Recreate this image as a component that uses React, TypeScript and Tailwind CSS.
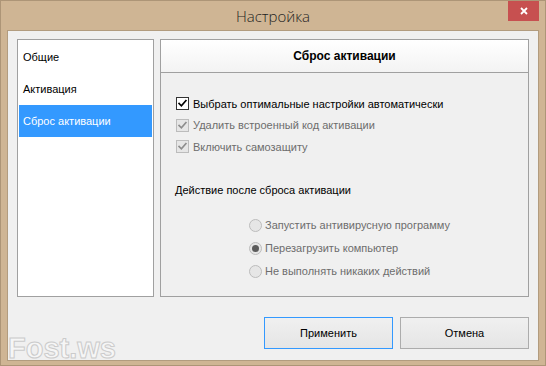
import React, { useState } from 'react';

const sections = ['Общие', 'Активация', 'Сброс активации'];

const CheckMark = ({ color }: { color: string }) => (
  <svg viewBox="0 0 13 13" className="w-[13px] h-[13px]">
    <path d="M2.5 6.5 L5.2 9.3 L10.5 3.2" fill="none" stroke={color} strokeWidth="2" strokeLinecap="square" />
  </svg>
);

const Checkbox = ({ label, disabled }: { label: string; disabled?: boolean }) => (
  <div className="h-[21.5px] flex items-center">
    <div
      className={`w-[13px] h-[13px] border flex items-center justify-center ${
        disabled ? 'border-[#bcbcbc] bg-[#e6e6e6]' : 'border-[#333333] bg-white'
      }`}
    >
      <CheckMark color={disabled ? '#8d8d8d' : '#000000'} />
    </div>
    <span className={`ml-[4px] ${disabled ? 'text-[#6d6d6d]' : 'text-black'}`}>{label}</span>
  </div>
);

const Radio = ({ label, checked }: { label: string; checked?: boolean }) => (
  <div className="h-[23px] flex items-center">
    <div className="w-[13px] h-[13px] rounded-full border border-[#bcbcbc] bg-[#e6e6e6] flex items-center justify-center">
      {checked && <div className="w-[7px] h-[7px] rounded-full bg-[#5c5c5c]" />}
    </div>
    <span className="ml-[3px] text-[#6d6d6d]">{label}</span>
  </div>
);

export default function App() {
  const [active, setActive] = useState(2);

  return (
    <div
      className="w-[546px] h-[366px] bg-[#cfb594] border border-[#ad9577] flex flex-col relative text-[11px]"
      style={{ fontFamily: '"Liberation Sans", Arial, sans-serif' }}
    >
      {/* Title bar */}
      <div className="h-[29px] shrink-0 flex items-center justify-center relative">
        <span
          className="text-[15px] font-light text-[#1e1e1e] pt-[1px]"
          style={{ fontFamily: '"Open Sans", "Noto Sans", sans-serif' }}
        >
          Настройка
        </span>
        <button className="absolute top-0 right-[6px] w-[31px] h-[20px] bg-[#c75050] flex items-center justify-center">
          <svg viewBox="0 0 8 8" className="w-[8px] h-[8px]">
            <path d="M1 1 L7 7 M7 1 L1 7" stroke="#ffffff" strokeWidth="1.8" />
          </svg>
        </button>
      </div>

      {/* Client area */}
      <div className="flex-1 mx-[6px] mb-[4px] border border-[#b29c7f] bg-[#f0f0f0] flex flex-col pt-[8px] pl-[9px] pr-[9px]">
        <div className="flex gap-[6px] h-[258px]">
          {/* Sections list */}
          <div className="w-[137px] border border-[#a0a0a0] bg-white p-[1px]">
            {sections.map((s, i) => (
              <div
                key={s}
                onClick={() => setActive(i)}
                className={`h-[32px] pl-[4px] flex items-center ${
                  active === i ? 'bg-[#3399ff] text-white' : 'text-black'
                }`}
              >
                {s}
              </div>
            ))}
          </div>

          {/* Section content */}
          <div className="flex-1 border border-[#a0a0a0] flex flex-col">
            <div className="h-[33px] shrink-0 border-b border-[#a0a0a0] bg-gradient-to-b from-white to-[#f3f3f3] flex items-center justify-center font-bold text-[12px] text-black">
              Сброс активации
            </div>
            <div className="pl-[15px] pt-[20px] flex flex-col">
              <Checkbox label="Выбрать оптимальные настройки автоматически" />
              <Checkbox label="Удалить встроенный код активации" disabled />
              <Checkbox label="Включить самозащиту" disabled />
              <div className="mt-[24px] h-[18px] flex items-center -ml-[1px] text-black">
                Действие после сброса активации
              </div>
              <div className="mt-[14px] pl-[73px] flex flex-col">
                <Radio label="Запустить антивирусную программу" />
                <Radio label="Перезагрузить компьютер" checked />
                <Radio label="Не выполнять никаких действий" />
              </div>
            </div>
          </div>
        </div>

        {/* Buttons */}
        <div className="mt-[20px] flex justify-end gap-[7px]">
          <button className="w-[129px] h-[32px] border border-[#3399ff] bg-gradient-to-b from-[#f0f0f0] to-[#e5e5e5] text-black">
            Применить
          </button>
          <button className="w-[129px] h-[32px] border border-[#acacac] bg-gradient-to-b from-[#f0f0f0] to-[#e5e5e5] text-black">
            Отмена
          </button>
        </div>
      </div>

      {/* Watermark */}
      <div className="absolute left-[7px] bottom-[2px] text-[29px] font-bold leading-none text-[#f6f6f6] [-webkit-text-stroke:1px_#cbcbcb] pointer-events-none">
        Fost.ws
      </div>
    </div>
  );
}
